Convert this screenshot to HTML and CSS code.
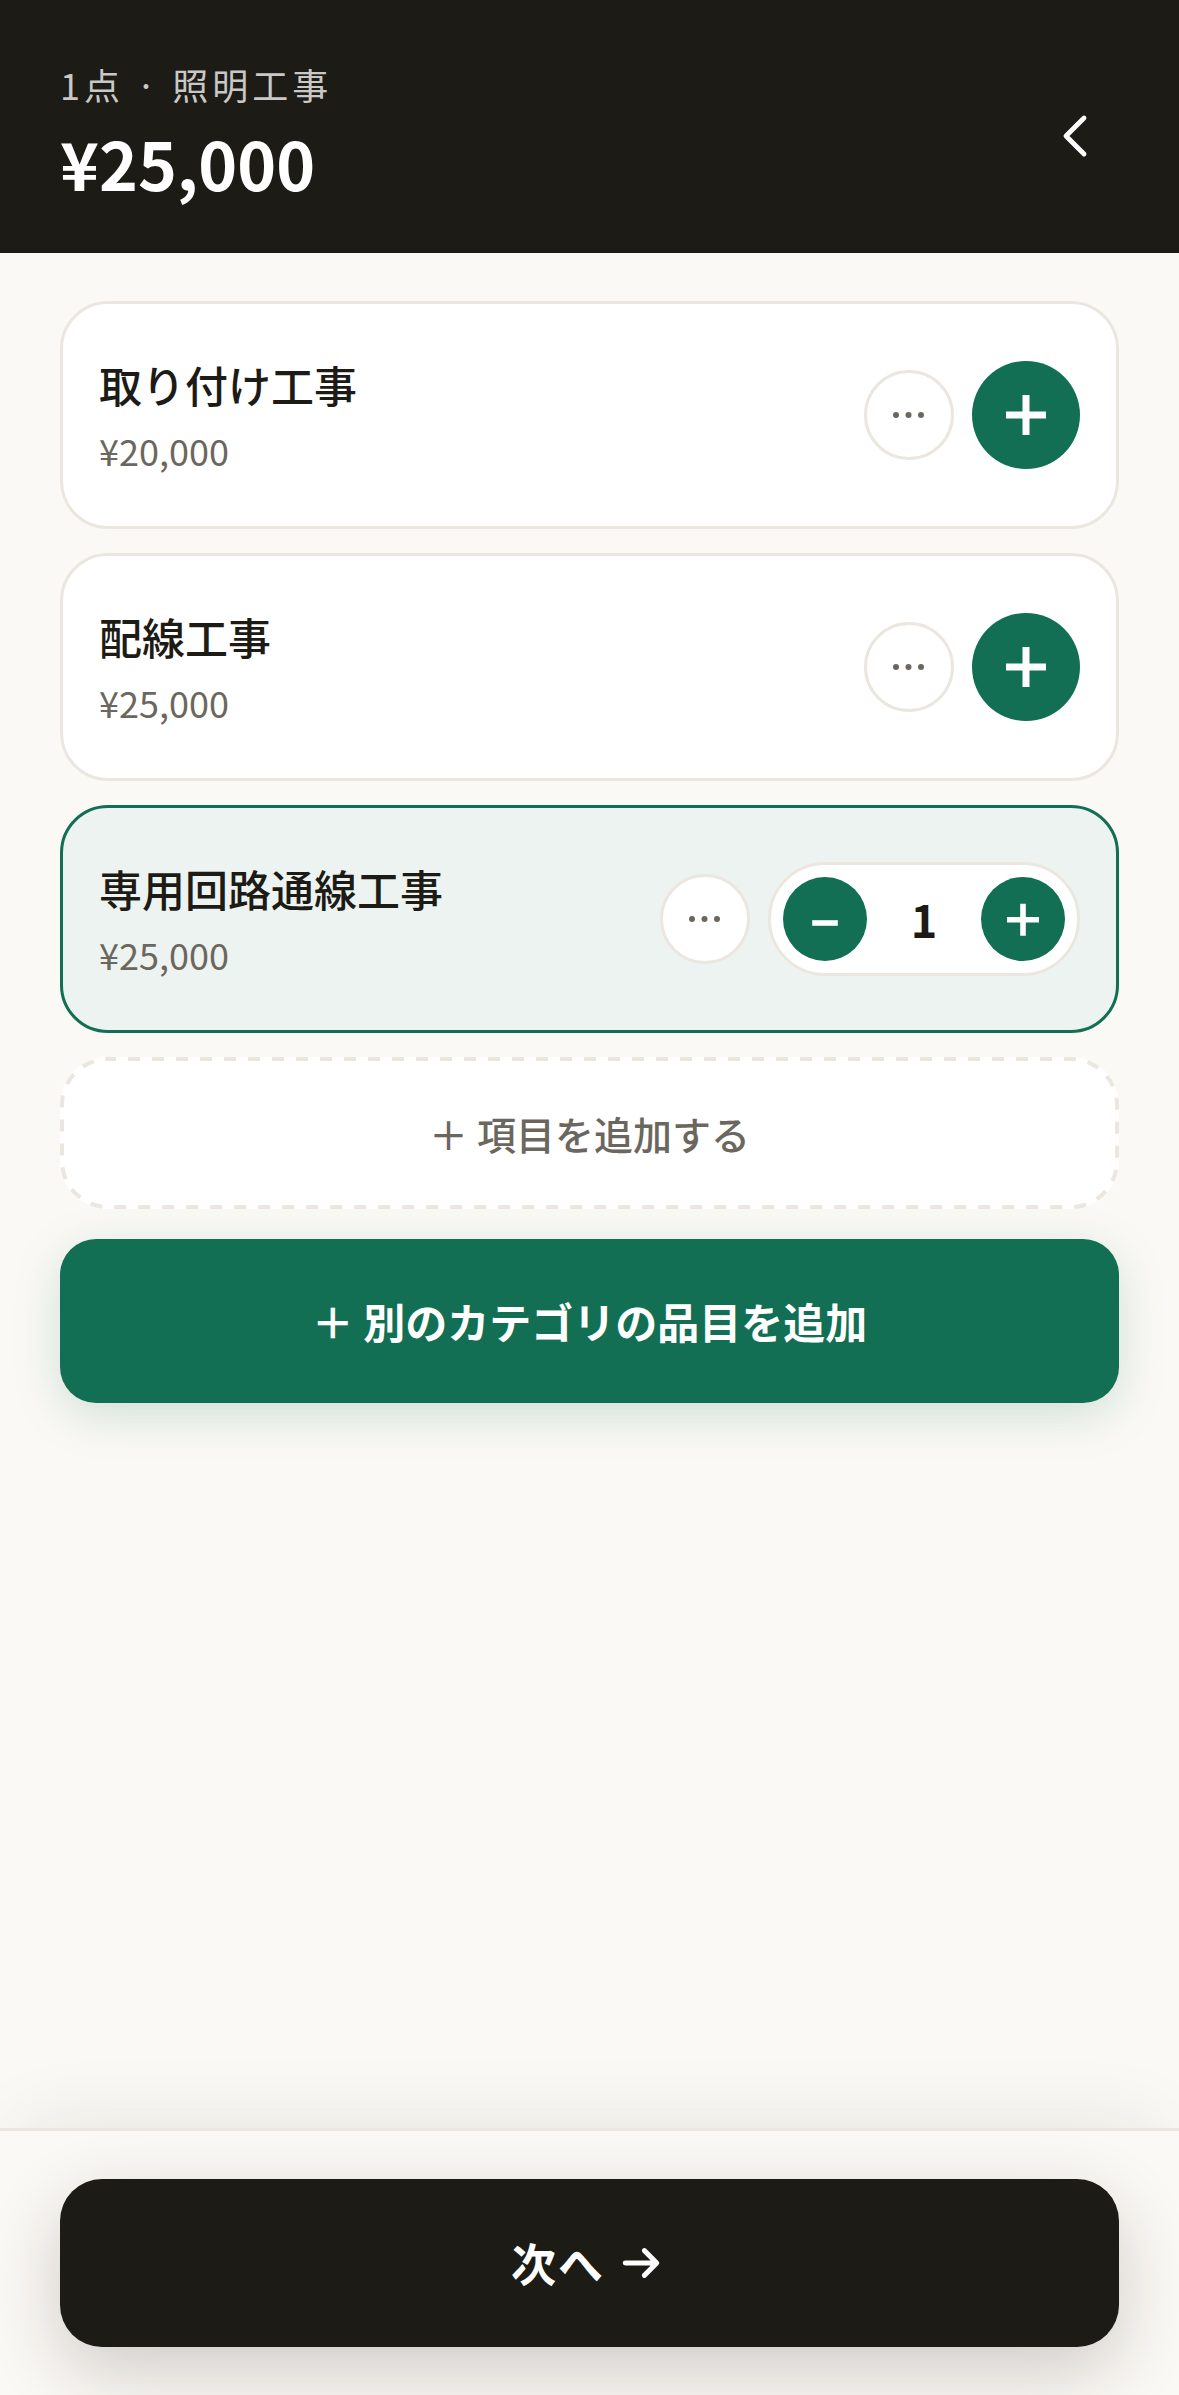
FILE: index.html
```html
<!DOCTYPE html>
<html lang="ja">

<head>
    <meta charset="UTF-8">
    <meta name="viewport" content="width=device-width, initial-scale=1">
    <title>照明工事</title>
    <link rel="stylesheet" href="styles.css">
</head>

<body>
    <header class="topbar">
        <div class="topbar-text">
            <p class="topbar-sub">1点 · 照明工事</p>
            <h1 class="topbar-total">¥25,000</h1>
        </div>
        <button class="back" type="button" aria-label="戻る">
            <svg viewBox="0 0 24 24"><path d="M15 6l-6 6 6 6"/></svg>
        </button>
    </header>

    <main class="content">
        <ul class="items">
            <li class="item">
                <div class="item-text">
                    <h2>取り付け工事</h2>
                    <p>¥20,000</p>
                </div>
                <button class="more" type="button" aria-label="メニュー">
                    <svg viewBox="0 0 30 30"><circle cx="2" cy="15" r="3"/><circle cx="14.5" cy="15" r="3"/><circle cx="27" cy="15" r="3"/></svg>
                </button>
                <button class="round plus" type="button" aria-label="追加">
                    <svg viewBox="0 0 40 40"><path d="M0 20h40M20 0v40"/></svg>
                </button>
            </li>
            <li class="item">
                <div class="item-text">
                    <h2>配線工事</h2>
                    <p>¥25,000</p>
                </div>
                <button class="more" type="button" aria-label="メニュー">
                    <svg viewBox="0 0 30 30"><circle cx="2" cy="15" r="3"/><circle cx="14.5" cy="15" r="3"/><circle cx="27" cy="15" r="3"/></svg>
                </button>
                <button class="round plus" type="button" aria-label="追加">
                    <svg viewBox="0 0 40 40"><path d="M0 20h40M20 0v40"/></svg>
                </button>
            </li>
            <li class="item selected">
                <div class="item-text">
                    <h2>専用回路通線工事</h2>
                    <p>¥25,000</p>
                </div>
                <button class="more" type="button" aria-label="メニュー">
                    <svg viewBox="0 0 30 30"><circle cx="2" cy="15" r="3"/><circle cx="14.5" cy="15" r="3"/><circle cx="27" cy="15" r="3"/></svg>
                </button>
                <div class="stepper">
                    <button class="round" type="button" aria-label="減らす">
                        <svg viewBox="0 0 40 40"><path d="M4 25h32"/></svg>
                    </button>
                    <span class="count">1</span>
                    <button class="round" type="button" aria-label="増やす">
                        <svg viewBox="0 0 40 40"><path d="M0 21h40M20 1v40"/></svg>
                    </button>
                </div>
            </li>
        </ul>
        <button class="add-item" type="button">
            <svg class="dashes" aria-hidden="true"><rect x="2" y="2" rx="46"/></svg>
            ＋ 項目を追加する
        </button>
        <button class="add-category" type="button">＋ 別のカテゴリの品目を追加</button>
    </main>

    <footer class="bottombar">
        <button class="next" type="button">
            次へ
            <svg viewBox="0 0 24 24"><path d="M5 12h13.5M13.5 6.5L19 12l-5.5 5.5"/></svg>
        </button>
    </footer>
</body>

</html>
```
FILE: styles.css
```css
:root {
    --bg: #fbf9f5;
    --dark: #1c1b16;
    --green: #126f54;
    --line: #ebe7e0;
    --muted: #6b675e;
}

* {
    box-sizing: border-box;
    margin: 0;
    padding: 0;
}

body {
    display: flex;
    flex-direction: column;
    min-height: 100vh;
    background-color: var(--bg);
    color: var(--dark);
    font-family: "Noto Sans CJK JP", sans-serif;
    font-size: 36px;
    line-height: 54px;
}

button {
    border: none;
    font-family: inherit;
    cursor: pointer;
}

svg {
    display: block;
    fill: none;
    stroke: currentColor;
}

/* header */

.topbar {
    display: flex;
    justify-content: space-between;
    align-items: center;
    padding: 60px 60px 41px;
    background-color: var(--dark);
    color: #fff;
}

.topbar-text {
    padding-bottom: 4px;
}

.topbar-sub {
    margin-bottom: 8px;
    line-height: 48px;
    letter-spacing: 4px;
    color: #c9c8c6;
}

.topbar-total {
    font-size: 66px;
    line-height: 92px;
}

.back {
    display: flex;
    justify-content: center;
    align-items: center;
    width: 88px;
    height: 88px;
    background: none;
    color: #fff;
}

.back svg {
    width: 72px;
    height: 72px;
    flex: none;
    stroke-width: 1.6;
    stroke-linecap: round;
    stroke-linejoin: round;
}

/* items */

.content {
    flex: 1;
    padding: 48px 60px;
}

.items {
    display: grid;
    gap: 24px;
    margin-bottom: 24px;
    list-style: none;
}

.item {
    display: flex;
    align-items: center;
    gap: 18px;
    padding: 49px 36px;
    border: 3px solid var(--line);
    border-radius: 48px;
    background-color: #fff;
}

.selected {
    border-color: var(--green);
    background-color: #ecf3f0;
}

.item-text {
    flex: 1;
}

.item-text h2 {
    margin-bottom: 8px;
    font-size: 43px;
    font-weight: 500;
    line-height: 62px;
}

.item-text p {
    color: var(--muted);
}

.more {
    display: grid;
    place-items: center;
    width: 90px;
    height: 90px;
    border: 3px solid var(--line);
    border-radius: 50%;
    background-color: #fff;
    color: var(--muted);
}

.more svg {
    width: 30px;
    height: 30px;
    overflow: visible;
    fill: currentColor;
    stroke: none;
}

.round {
    display: grid;
    place-items: center;
    width: 84px;
    height: 84px;
    border-radius: 50%;
    background-color: var(--green);
    color: #fff;
}

.round svg {
    width: 32px;
    height: 32px;
    overflow: visible;
    stroke-width: 7;
}

.plus {
    width: 108px;
    height: 108px;
}

.plus svg {
    width: 40px;
    height: 40px;
}

.stepper {
    display: flex;
    align-items: center;
    padding: 12px;
    border: 3px solid var(--line);
    border-radius: 57px;
    background-color: #fff;
}

.count {
    width: 114px;
    font-size: 45px;
    font-weight: 700;
    text-align: center;
}

/* add buttons */

.add-item {
    position: relative;
    display: block;
    width: 100%;
    margin-bottom: 30px;
    padding: 46px 36px;
    border-radius: 48px;
    background-color: #fff;
    color: var(--muted);
    font-size: 39px;
    font-weight: 500;
    line-height: 60px;
}

.dashes {
    position: absolute;
    inset: 0;
    width: 100%;
    height: 100%;
}

.dashes rect {
    width: calc(100% - 4px);
    height: calc(100% - 4px);
    stroke: var(--line);
    stroke-width: 4;
    stroke-dasharray: 12 12;
    stroke-dashoffset: 4;
}

.add-category {
    display: block;
    width: 100%;
    padding: 50px 36px;
    border-radius: 36px;
    background-color: var(--green);
    color: #fff;
    font-size: 42px;
    font-weight: 700;
    line-height: 64px;
    box-shadow: 0 12px 48px rgba(18, 111, 84, 0.18);
}

/* footer */

.bottombar {
    padding: 48px 60px;
    border-top: 3px solid var(--line);
    background-color: var(--bg);
    box-shadow: 0 -24px 72px -24px rgba(28, 27, 22, 0.1);
}

.next {
    display: flex;
    justify-content: center;
    align-items: center;
    gap: 9px;
    width: 100%;
    padding: 50px 36px;
    border-radius: 42px;
    background-color: var(--dark);
    color: #fff;
    font-size: 45px;
    font-weight: 700;
    line-height: 68px;
    letter-spacing: 2px;
    box-shadow: 0 24px 72px rgba(28, 27, 22, 0.2);
}

.next svg {
    width: 54px;
    height: 54px;
    stroke-width: 2.2;
    stroke-linecap: round;
    stroke-linejoin: round;
}
```
